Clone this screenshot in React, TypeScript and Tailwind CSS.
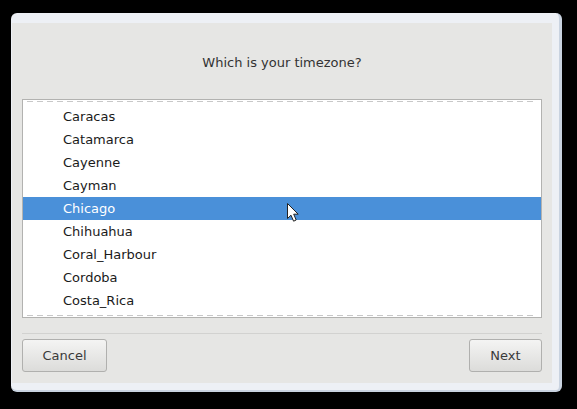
import React from 'react';

const zones = ['Caracas', 'Catamarca', 'Cayenne', 'Cayman', 'Chicago', 'Chihuahua', 'Coral_Harbour', 'Cordoba', 'Costa_Rica'];

const font = { fontFamily: '"DejaVu Sans", "Liberation Sans", sans-serif' };

export default function App() {
  return (
    <div className="w-[577px] h-[409px] bg-black pt-[13px] pl-[11px] relative" style={font}>
      {/* window frame */}
      <div className="w-[551px] h-[379px] rounded-[6px] bg-[#edf0f5] border-r-[3px] border-b-[2px] border-[#c9d3e0] pl-px pt-[10px] pr-[7px] pb-[7px]">
        <div className="w-[540px] h-[360px] bg-[#e6e6e4] px-[10px] flex flex-col">
          <div className="h-[76px] pt-[4px] flex items-center justify-center text-[13px] text-[#333333]">
            Which is your timezone?
          </div>

          {/* list */}
          <div className="h-[219px] bg-white border border-[#b2b2b0] flex flex-col">
            <div className="h-[5px] flex flex-col">
              <div className="h-px" />
              <div className="h-px mx-[4px] bg-[repeating-linear-gradient(90deg,#c8c8c8_0_6px,transparent_6px_10px)]" />
            </div>
            {zones.map((z) => (
              <div
                key={z}
                className={
                  z === 'Chicago'
                    ? 'h-[23px] flex items-center pl-[40px] text-[13px] bg-[#4a90d9] text-white'
                    : 'h-[23px] flex items-center pl-[40px] text-[13px] text-[#1a1a1a]'
                }
              >
                {z}
              </div>
            ))}
            <div className="flex-1 flex flex-col justify-end pb-px">
              <div className="h-px mx-[4px] bg-[repeating-linear-gradient(90deg,#c8c8c8_0_6px,transparent_6px_10px)]" />
            </div>
          </div>

          <div className="mt-[15px] h-px bg-[#d2d2d0]" />

          <div className="mt-[5px] flex justify-between">
            <button className="w-[85px] h-[33px] rounded-[3px] border border-[#b0b0ae] bg-gradient-to-b from-[#f4f4f3] to-[#dcdcda] text-[13px] text-[#3a3a3a]">
              Cancel
            </button>
            <button className="w-[73px] h-[33px] rounded-[3px] border border-[#b0b0ae] bg-gradient-to-b from-[#f4f4f3] to-[#dcdcda] text-[13px] text-[#3a3a3a]">
              Next
            </button>
          </div>
        </div>
      </div>

      {/* mouse pointer */}
      <svg className="absolute left-[286px] top-[202px]" width="14" height="22" viewBox="0 0 14 22">
        <path d="M1.5 1.5 L1.5 16.5 L5 13.2 L7.6 19.2 L10.2 18 L7.7 12.2 L12.2 12.2 Z" fill="#ffffff" stroke="#222222" strokeWidth="1" strokeLinejoin="round" />
      </svg>
    </div>
  );
}
